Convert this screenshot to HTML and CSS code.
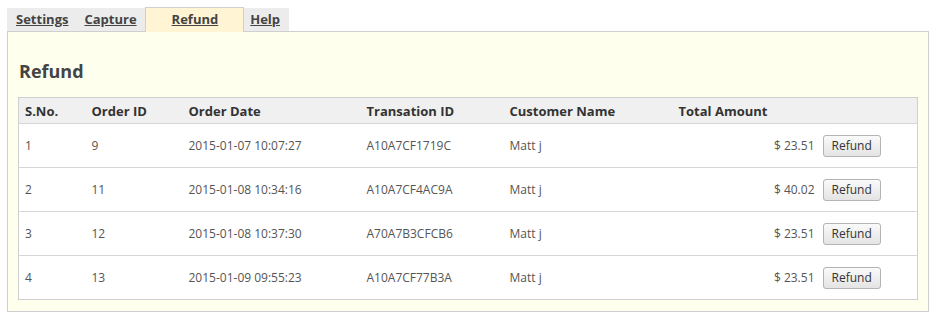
FILE: index.html
```html
<!DOCTYPE html>
<html lang="en">
<head>
    <meta charset="UTF-8">
    <title>Refund</title>
    <link rel="stylesheet" href="styles.css">
</head>
<body>
    <div class="tabs">
        <a class="tab tab-first" href="#">Settings</a>
        <a class="tab" href="#">Capture</a>
        <a class="tab active" href="#">Refund</a>
        <a class="tab tab-last" href="#">Help</a>
    </div>

    <div class="panel">
        <h2>Refund</h2>
        <table class="orders">
            <colgroup>
                <col style="width: 67px">
                <col style="width: 97px">
                <col style="width: 178px">
                <col style="width: 143px">
                <col style="width: 169px">
                <col style="width: 144px">
                <col>
            </colgroup>
            <thead>
                <tr>
                    <th>S.No.</th>
                    <th>Order ID</th>
                    <th>Order Date</th>
                    <th>Transation ID</th>
                    <th>Customer Name</th>
                    <th>Total Amount</th>
                    <th></th>
                </tr>
            </thead>
            <tbody>
                <tr>
                    <td>1</td>
                    <td>9</td>
                    <td>2015-01-07 10:07:27</td>
                    <td>A10A7CF1719C</td>
                    <td>Matt j</td>
                    <td class="amount">$ 23.51</td>
                    <td><button class="btn">Refund</button></td>
                </tr>
                <tr>
                    <td>2</td>
                    <td>11</td>
                    <td>2015-01-08 10:34:16</td>
                    <td>A10A7CF4AC9A</td>
                    <td>Matt j</td>
                    <td class="amount">$ 40.02</td>
                    <td><button class="btn">Refund</button></td>
                </tr>
                <tr>
                    <td>3</td>
                    <td>12</td>
                    <td>2015-01-08 10:37:30</td>
                    <td>A70A7B3CFCB6</td>
                    <td>Matt j</td>
                    <td class="amount">$ 23.51</td>
                    <td><button class="btn">Refund</button></td>
                </tr>
                <tr>
                    <td>4</td>
                    <td>13</td>
                    <td>2015-01-09 09:55:23</td>
                    <td>A10A7CF77B3A</td>
                    <td>Matt j</td>
                    <td class="amount">$ 23.51</td>
                    <td><button class="btn">Refund</button></td>
                </tr>
            </tbody>
        </table>
    </div>
</body>
</html>
```

FILE: styles.css
```css
body {
    font-family: "Open Sans", Arial, sans-serif;
    margin: 0;
    padding: 8px 8px 0 7px;
    background: #fff;
    color: #555;
}
.tabs {
    display: flex;
    align-items: flex-end;
    height: 23px;
}
.tab {
    display: block;
    height: 23px;
    line-height: 22px;
    padding: 0 8px;
    background: #ececec;
    color: #444;
    font-size: 13px;
    font-weight: bold;
    text-decoration: underline;
}
.tab-first {
    padding-left: 9px;
    padding-right: 8px;
}
.tab.active {
    position: relative;
    z-index: 1;
    height: 24px;
    margin-bottom: -1px;
    padding: 0 25px 0 26px;
    line-height: 23px;
    background: #fff4d3;
    border: 1px solid #cfcfcf;
    border-bottom: none;
}
.tab-last {
    padding: 0 9px 0 6px;
}
.panel {
    background: #ffffee;
    border: 1px solid #cfcfcf;
    padding: 1px 10px 11px 10px;
}
.panel h2 {
    margin: 26px 0 14px 1px;
    font-size: 18px;
    color: #444;
    line-height: 24px;
}
.orders {
    width: 100%;
    border-collapse: collapse;
    table-layout: fixed;
    background: #fff;
    border: 1px solid #cfcfcf;
    font-size: 12px;
}
.orders th {
    background: #f0f0f0;
    text-align: left;
    font-size: 13px;
    color: #333;
    height: 25px;
    padding: 0 6px;
}
.orders td {
    height: 43px;
    padding: 0 6px;
    border-top: 1px solid #d6d6d6;
}
.orders td.amount {
    text-align: right;
    padding-right: 2px;
}
.btn {
    font-family: "Open Sans", Arial, sans-serif;
    font-size: 12px;
    color: #333;
    height: 22px;
    padding: 0 8px;
    border: 1px solid #b4b4b4;
    border-radius: 3px;
    background: linear-gradient(#fafafa, #e4e4e4);
}
```
